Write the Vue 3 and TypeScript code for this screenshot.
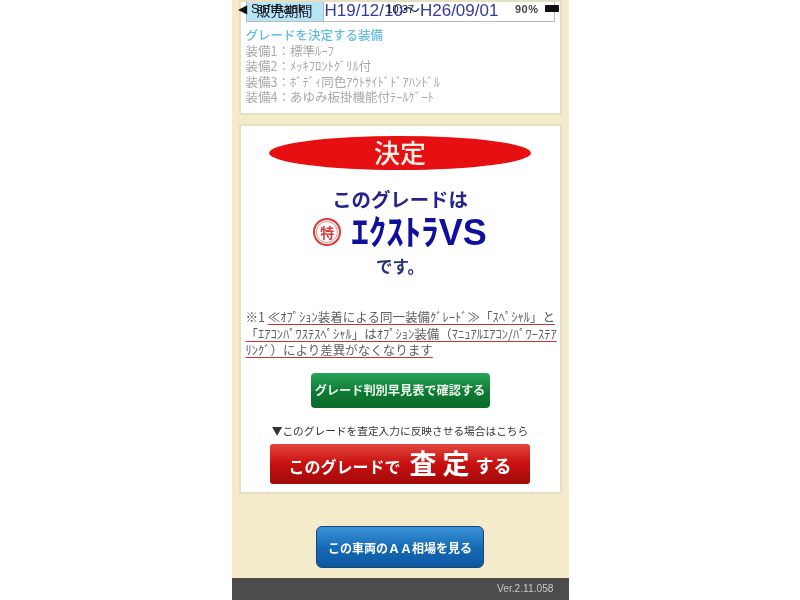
<script setup lang="ts">
const equipment: string[] = [
  '装備1：標準ﾙｰﾌ',
  '装備2：ﾒｯｷﾌﾛﾝﾄｸﾞﾘﾙ付',
  '装備3：ﾎﾞﾃﾞｨ同色ｱｳﾄｻｲﾄﾞﾄﾞｱﾊﾝﾄﾞﾙ',
  '装備4：あゆみ板掛機能付ﾃｰﾙｹﾞｰﾄ',
]
</script>

<template>
  <div class="page">
    <div class="phone">
      <div class="status">
        <span class="carrier">◀ SoftBank</span>
        <span class="clock">10:37</span>
        <span class="battery-group">
          <span class="percent">90%</span>
          <span class="battery"></span>
        </span>
      </div>

      <section class="card card-top">
        <div class="period">
          <div class="period-label">販売期間</div>
          <div class="period-value">H19/12/10〜H26/09/01</div>
        </div>
        <h2 class="equip-title">グレードを決定する装備</h2>
        <p v-for="item in equipment" :key="item" class="equip-line">{{ item }}</p>
      </section>

      <section class="card card-main">
        <div class="decision">決定</div>
        <p class="grade-text">このグレードは</p>
        <div class="grade-row">
          <span class="stamp"><span>特</span></span>
          <span class="grade-name">ｴｸｽﾄﾗ<span class="latin">VS</span></span>
        </div>
        <p class="grade-text grade-end">です。</p>

        <p class="note">
          <span>※1 </span><u>≪ｵﾌﾟｼｮﾝ装着による同一装備ｸﾞﾚｰﾄﾞ≫「ｽﾍﾟｼｬﾙ」と</u><br />
          <u>「ｴｱｺﾝﾊﾟﾜｽﾃｽﾍﾟｼｬﾙ」はｵﾌﾟｼｮﾝ装備（ﾏﾆｭｱﾙｴｱｺﾝ/ﾊﾟﾜｰｽﾃｱ</u><br />
          <u>ﾘﾝｸﾞ）により差異がなくなります</u>
        </p>

        <button class="btn btn-green" type="button">グレード判別早見表で確認する</button>
        <p class="hint">▼このグレードを査定入力に反映させる場合はこちら</p>
        <button class="btn btn-red" type="button">
          このグレードで<span class="big">査 定</span><span class="suffix">する</span>
        </button>
      </section>

      <div class="aa-wrap">
        <button class="btn btn-blue" type="button">この車両のＡＡ相場を見る</button>
      </div>

      <footer class="footer">Ver.2.11.058</footer>
    </div>
  </div>
</template>

<style>
html,
body {
  margin: 0;
  background: #fff;
}
</style>

<style scoped>
* {
  box-sizing: border-box;
}
.page {
  width: 800px;
  height: 600px;
  overflow: hidden;
  display: flex;
  justify-content: center;
  background: #fff;
  font-family: "Noto Sans CJK JP", "Noto Sans", sans-serif;
  filter: blur(0.45px);
}
.phone {
  position: relative;
  width: 337px;
  height: 600px;
  background: #f3ebca;
  display: flex;
  flex-direction: column;
}
.status {
  position: absolute;
  top: 0;
  left: 0;
  right: 0;
  height: 17px;
  padding: 0 10px 0 6px;
  display: flex;
  justify-content: space-between;
  align-items: center;
  font-size: 11px;
  color: #111;
  font-family: "Liberation Sans", sans-serif;
}
.carrier {
  font-size: 12px;
  letter-spacing: 0.6px;
}
.clock {
  position: absolute;
  left: 155px;
  font-size: 11px;
}
.battery-group {
  display: flex;
  align-items: center;
  gap: 6px;
}
.percent {
  font-size: 11px;
  font-weight: 700;
  letter-spacing: 0.5px;
  color: #444;
}
.battery {
  display: block;
  width: 14px;
  height: 7px;
  background: #111;
  border-radius: 1px;
}
.card {
  margin: 0 7px;
  background: #fff;
  border: 2px solid #e6dfc4;
}
.card-top {
  height: 115px;
  padding: 0 5px;
  flex: none;
}
.period {
  display: flex;
  height: 20px;
  border: 1px solid #b9b9c4;
  border-top: 0;
}
.period-label {
  width: 77px;
  background: #b6e6f6;
  color: #223;
  font-size: 14px;
  line-height: 17px;
  text-align: center;
  border-right: 1px solid #b9b9c4;
}
.period-value {
  flex: 1;
  padding-left: 1px;
  color: #353a9c;
  font-size: 17px;
  line-height: 17px;
  font-family: "Liberation Sans", "Noto Sans CJK JP", sans-serif;
  white-space: nowrap;
}
.equip-title {
  margin: 4px 0 0;
  font-size: 12.5px;
  line-height: 17px;
  font-weight: 500;
  color: #62bce2;
}
.equip-line {
  margin: 0;
  font-size: 12.5px;
  line-height: 15.3px;
  color: #a8a8a8;
  white-space: nowrap;
}
.card-main {
  margin-top: 9px;
  height: 370px;
  flex: none;
  padding: 10px 5px 0;
  display: flex;
  flex-direction: column;
  align-items: center;
}
.decision {
  width: 262px;
  height: 34px;
  border-radius: 50%;
  background: #e60f12;
  color: #fff0e8;
  font-size: 26px;
  font-weight: 500;
  line-height: 32px;
  text-align: center;
  flex: none;
}
.grade-text {
  margin: 15px 0 0;
  font-size: 19.4px;
  line-height: 28px;
  font-weight: 700;
  color: #24248c;
}
.grade-row {
  display: flex;
  align-items: center;
  gap: 10px;
  height: 37px;
}
.stamp {
  width: 28px;
  height: 28px;
  border-radius: 50%;
  border: 2px solid #d83a3a;
  display: flex;
  align-items: center;
  justify-content: center;
  color: #d83a3a;
  font-size: 14px;
  font-weight: 700;
  flex: none;
}
.stamp span {
  width: 22px;
  height: 22px;
  border-radius: 50%;
  border: 1px solid #e88;
  display: flex;
  align-items: center;
  justify-content: center;
  line-height: 1;
}
.grade-name {
  font-size: 35px;
  line-height: 38px;
  font-weight: 700;
  color: #10109c;
  white-space: nowrap;
}
.latin {
  font-family: "Liberation Sans", sans-serif;
  font-size: 36px;
}
.grade-end {
  margin: 2px 0 0;
  font-size: 16.5px;
  color: #24307c;
}
.note {
  align-self: stretch;
  margin: 29px 0 0;
  font-size: 12.5px;
  line-height: 16.5px;
  color: #5c5c5c;
  white-space: nowrap;
}
.note u {
  text-decoration: underline;
  text-decoration-color: #c8323c;
  text-decoration-thickness: 1px;
  text-underline-offset: 2px;
}
.btn {
  display: block;
  border: 0;
  padding: 0;
  color: #fff;
  font-family: inherit;
  font-weight: 700;
  white-space: nowrap;
  text-align: center;
  flex: none;
}
.btn-green {
  width: 179px;
  height: 35px;
  margin-top: 14px;
  border-radius: 4px;
  font-size: 12.2px;
  background: linear-gradient(#2aa35a, #0f7a33 55%, #0a6a2a);
  color: #eef8ef;
}
.hint {
  margin: 15px 0 0;
  font-size: 10.7px;
  line-height: 16px;
  color: #333;
  white-space: nowrap;
}
.btn-red {
  width: 260px;
  height: 40px;
  margin-top: 5px;
  border-radius: 3px;
  font-size: 16px;
  line-height: 38px;
  background: linear-gradient(#e2463c, #c81010 50%, #a00a0a);
}
.big {
  font-size: 27px;
  margin: 0 6px 0 9px;
  vertical-align: -1px;
}
.suffix {
  font-size: 18px;
}
.aa-wrap {
  flex: 1;
  display: flex;
  align-items: flex-start;
  justify-content: center;
  padding-top: 32px;
}
.btn-blue {
  width: 168px;
  height: 42px;
  border-radius: 6px;
  font-size: 12px;
  border: 1px solid #14457e;
  background: linear-gradient(#3a93d6, #1568b4 55%, #0d58a0);
}
.footer {
  flex: none;
  height: 22px;
  padding-right: 15px;
  background: #4c4c4c;
  color: #c8c8c8;
  font-size: 10.2px;
  line-height: 22px;
  text-align: right;
  font-family: "Liberation Sans", sans-serif;
}
</style>
